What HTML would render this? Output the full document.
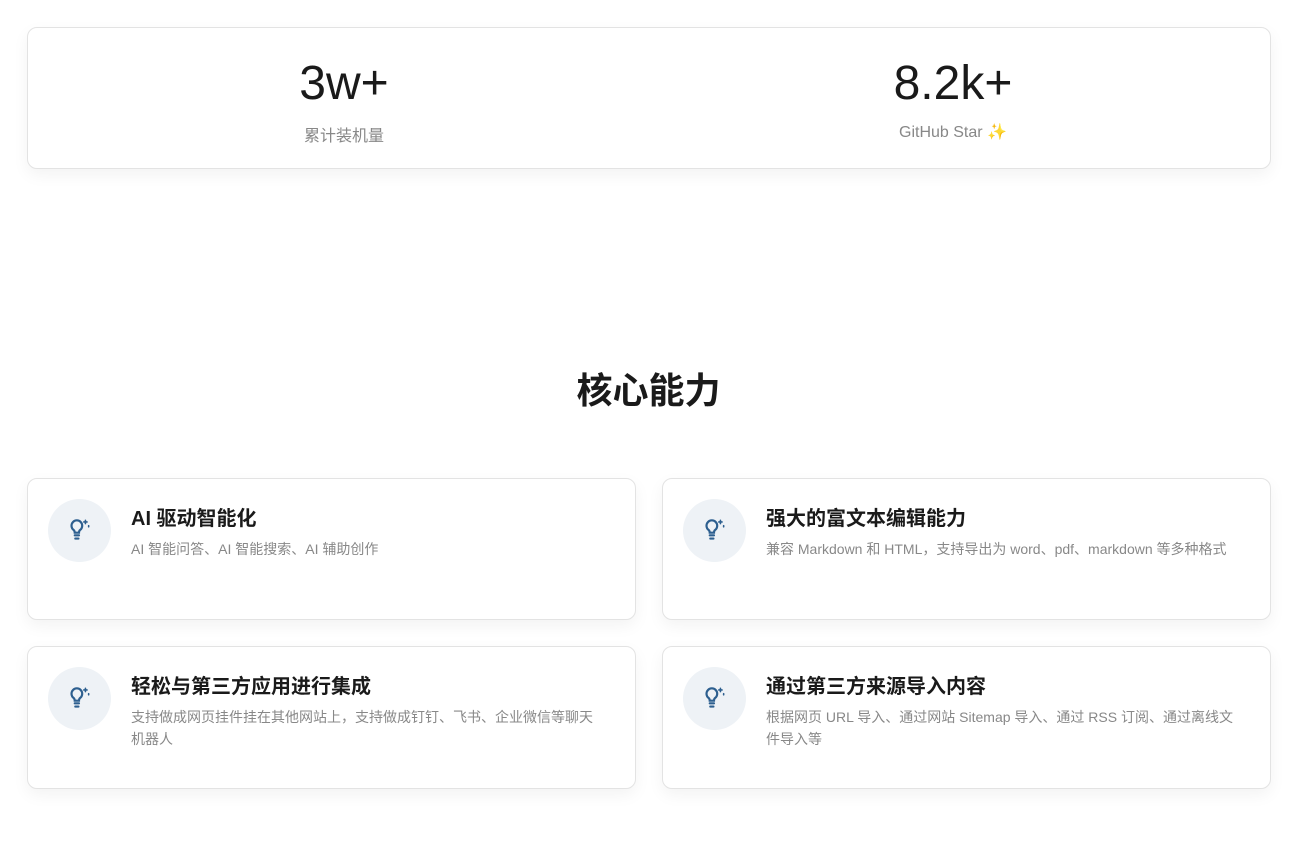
<!DOCTYPE html>
<html><head><meta charset="utf-8"><style>
*{box-sizing:border-box;margin:0;padding:0}
body{width:1297px;height:865px;background:#fff;font-family:"Liberation Sans","Noto Sans CJK SC",sans-serif;position:relative;overflow:hidden;color:#222}
.card{position:absolute;border:1px solid #e3e3e3;border-radius:10px;background:#fff;box-shadow:0 6px 16px rgba(0,0,0,.05)}
.stat{position:absolute;text-align:center;width:300px}
.num{font-size:48px;color:#1a1a1a;line-height:56px}
.lbl{font-size:16px;color:#888;margin-top:10px}
h2{position:absolute;top:362px;left:0;width:1297px;text-align:center;font-size:36px;font-weight:700;color:#1a1a1a}
.ic{position:absolute;left:20px;top:20px;width:63px;height:63px;border-radius:50%;background:#eef2f6}
.ic svg{position:absolute;left:16px;top:16px}
.t{position:absolute;left:103px;top:23px;font-size:20px;font-weight:700;color:#1a1a1a}
.d{position:absolute;left:103px;top:59px;right:22px;font-size:14px;line-height:22px;color:#888}
</style></head><body>
<div class="card" style="left:27px;top:27px;width:1244px;height:142px">
<div class="stat" style="left:166px;top:28px"><div class="num">3w+</div><div class="lbl">累计装机量</div></div>
<div class="stat" style="left:775px;top:28px"><div class="num">8.2k+</div><div class="lbl">GitHub Star ✨</div></div>
</div>
<h2>核心能力</h2>
<div class="card" style="left:27px;top:478px;width:609px;height:142px"><div class="ic"><svg width="30" height="30" viewBox="0 0 28 28" fill="none" stroke="#2d5f8f" stroke-width="2" stroke-linecap="round"><path d="M9 14a5 5 0 1 1 6 0c-1 .8-1 1.5-1 2.5h-4c0-1 0-1.7-1-2.5z"/><path d="M10 19h4M10.5 22h3"/><path d="M20 5v3M18.5 6.5h3M23 10v1" stroke-width="1.5"/></svg></div><div class="t">AI 驱动智能化</div><div class="d">AI 智能问答、AI 智能搜索、AI 辅助创作</div></div>
<div class="card" style="left:662px;top:478px;width:609px;height:142px"><div class="ic"><svg width="30" height="30" viewBox="0 0 28 28" fill="none" stroke="#2d5f8f" stroke-width="2" stroke-linecap="round"><path d="M9 14a5 5 0 1 1 6 0c-1 .8-1 1.5-1 2.5h-4c0-1 0-1.7-1-2.5z"/><path d="M10 19h4M10.5 22h3"/><path d="M20 5v3M18.5 6.5h3M23 10v1" stroke-width="1.5"/></svg></div><div class="t">强大的富文本编辑能力</div><div class="d">兼容 Markdown 和 HTML，支持导出为 word、pdf、markdown 等多种格式</div></div>
<div class="card" style="left:27px;top:646px;width:609px;height:143px"><div class="ic"><svg width="30" height="30" viewBox="0 0 28 28" fill="none" stroke="#2d5f8f" stroke-width="2" stroke-linecap="round"><path d="M9 14a5 5 0 1 1 6 0c-1 .8-1 1.5-1 2.5h-4c0-1 0-1.7-1-2.5z"/><path d="M10 19h4M10.5 22h3"/><path d="M20 5v3M18.5 6.5h3M23 10v1" stroke-width="1.5"/></svg></div><div class="t">轻松与第三方应用进行集成</div><div class="d">支持做成网页挂件挂在其他网站上，支持做成钉钉、飞书、企业微信等聊天<br>机器人</div></div>
<div class="card" style="left:662px;top:646px;width:609px;height:143px"><div class="ic"><svg width="30" height="30" viewBox="0 0 28 28" fill="none" stroke="#2d5f8f" stroke-width="2" stroke-linecap="round"><path d="M9 14a5 5 0 1 1 6 0c-1 .8-1 1.5-1 2.5h-4c0-1 0-1.7-1-2.5z"/><path d="M10 19h4M10.5 22h3"/><path d="M20 5v3M18.5 6.5h3M23 10v1" stroke-width="1.5"/></svg></div><div class="t">通过第三方来源导入内容</div><div class="d">根据网页 URL 导入、通过网站 Sitemap 导入、通过 RSS 订阅、通过离线文<br>件导入等</div></div>
</body></html>
